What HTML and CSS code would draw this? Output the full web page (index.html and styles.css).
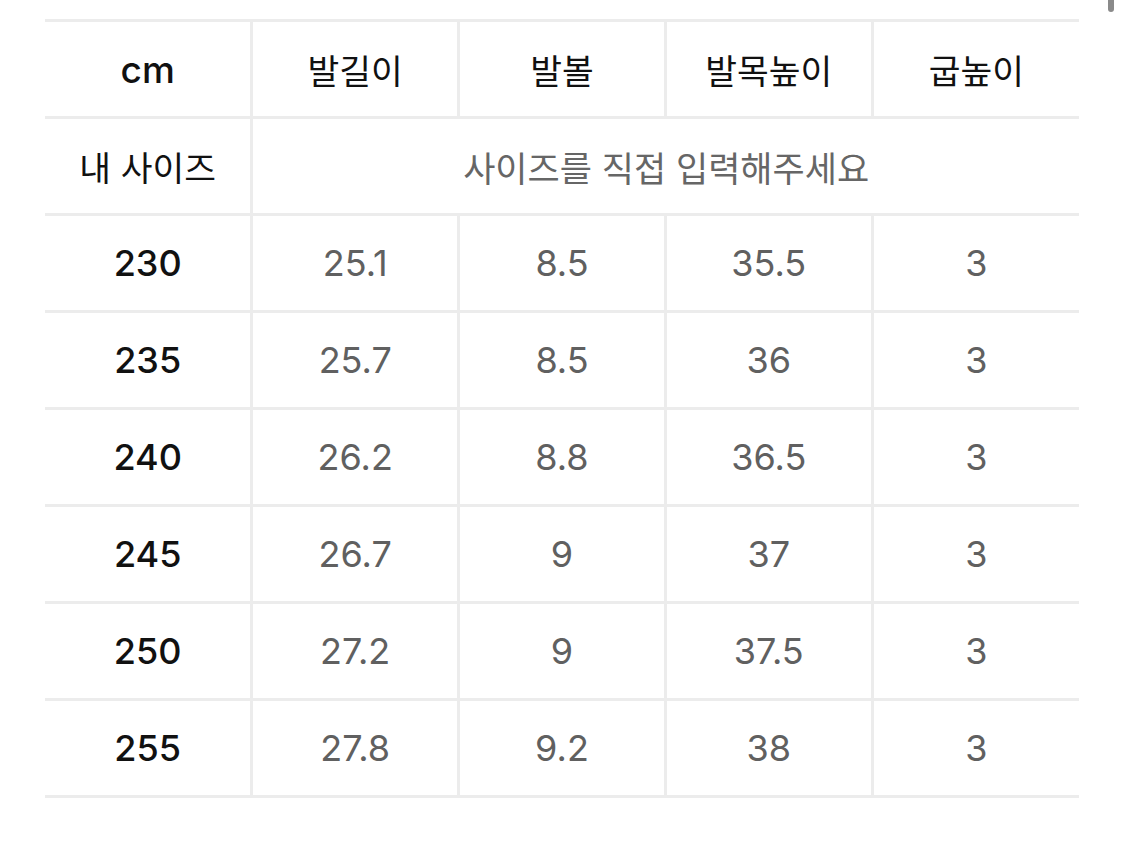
FILE: index.html
```html
<!DOCTYPE html>
<html lang="ko">
<head>
<meta charset="utf-8">
<link rel="stylesheet" href="styles.css">
</head>
<body>
<div class="scroll-thumb"></div>
<table class="size-table">
  <colgroup><col><col><col><col><col></colgroup>
  <tr class="head"><th>cm</th><th>발길이</th><th>발볼</th><th>발목높이</th><th>굽높이</th></tr>
  <tr><th>내 사이즈</th><td colspan="4" class="placeholder">사이즈를 직접 입력해주세요</td></tr>
  <tr><th class="num">230</th><td>25.1</td><td>8.5</td><td>35.5</td><td>3</td></tr>
  <tr><th class="num">235</th><td>25.7</td><td>8.5</td><td>36</td><td>3</td></tr>
  <tr><th class="num">240</th><td>26.2</td><td>8.8</td><td>36.5</td><td>3</td></tr>
  <tr><th class="num">245</th><td>26.7</td><td>9</td><td>37</td><td>3</td></tr>
  <tr><th class="num">250</th><td>27.2</td><td>9</td><td>37.5</td><td>3</td></tr>
  <tr><th class="num">255</th><td>27.8</td><td>9.2</td><td>38</td><td>3</td></tr>
</table>
</body>
</html>
```
FILE: styles.css
```css
html, body { margin: 0; padding: 0; background: #fff; }
body {
  font-family: "Inter", "Noto Sans CJK KR", sans-serif;
  padding: 19px 0 0 45px;
  position: relative;
  width: 1125px;
  height: 844px;
  box-sizing: border-box;
  overflow: hidden;
}
.scroll-thumb {
  position: absolute;
  top: -6px;
  left: 1108px;
  width: 6px;
  height: 18px;
  border-radius: 3px;
  background: #8a8a8a;
}
.size-table {
  border-collapse: collapse;
  width: 1034px;
  table-layout: fixed;
}
.size-table th, .size-table td {
  border: 3px solid #ececec;
  height: 94px;
  padding: 0;
  text-align: center;
  vertical-align: middle;
  font-size: 34.5px;
  line-height: 1;
}
.size-table tr > :first-child { border-left: none; }
.size-table tr > :last-child { border-right: none; }
.size-table th {
  font-weight: 400;
  color: #111;
  font-family: "Noto Sans CJK KR", sans-serif;
}
.size-table th.num {
  font-family: "Inter", "Noto Sans CJK KR", sans-serif;
  font-weight: 500;
  font-size: 36px;
}
.size-table td {
  color: #606060;
  font-weight: 400;
  font-size: 36px;
}
.size-table td.placeholder {
  font-family: "Noto Sans CJK KR", sans-serif;
  font-size: 35px;
  color: #666;
}
.head th { font-family: "Noto Sans CJK KR", sans-serif; }
.head th:first-child { font-family: "Inter", sans-serif; font-size: 37px; font-weight: 500; }
```
